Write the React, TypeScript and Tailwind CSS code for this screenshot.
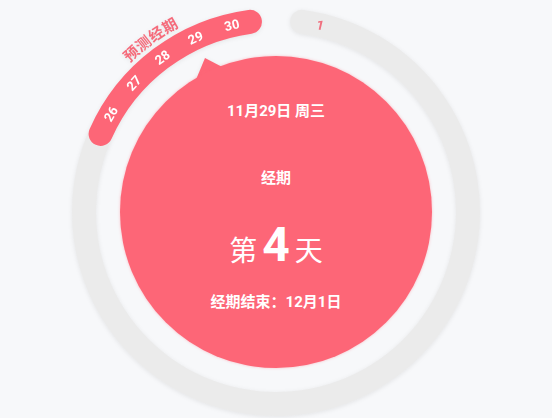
import React from 'react';

const CX = 276;
const CY = 212;
const RING_R = 192;

const PINK = '#fd6677';
const GREY = '#ebebeb';

// point on the dial, angle in degrees clockwise from 12 o'clock
function polar(r: number, deg: number) {
  const a = (deg * Math.PI) / 180;
  return [CX + r * Math.sin(a), CY - r * Math.cos(a)];
}

function arcPath(r: number, from: number, to: number) {
  const [x0, y0] = polar(r, from);
  const [x1, y1] = polar(r, to);
  const large = to - from > 180 ? 1 : 0;
  return `M${x0.toFixed(2)} ${y0.toFixed(2)} A${r} ${r} 0 ${large} 1 ${x1.toFixed(2)} ${y1.toFixed(2)}`;
}

const periodDays = [
  { label: '26', angle: -59.3 },
  { label: '27', angle: -47.8 },
  { label: '28', angle: -36.3 },
  { label: '29', angle: -24.8 },
  { label: '30', angle: -13.3 },
];

function Dial() {
  return (
    <svg
      width="552"
      height="418"
      viewBox="0 0 552 418"
      className="absolute inset-0 drop-shadow-[0_1px_2px_rgba(0,0,0,0.08)]"
    >
      <defs>
        <path id="forecast-path" d={arcPath(209, -80, 0)} fill="none" />
      </defs>

      {/* grey track */}
      <path d={arcPath(RING_R, 7.8, 294)} stroke={GREY} strokeWidth={24} strokeLinecap="round" fill="none" />
      {/* predicted period arc */}
      <path d={arcPath(RING_R, -66, -7.8)} stroke={PINK} strokeWidth={24} strokeLinecap="round" fill="none" />

      {periodDays.map((d) => (
        <text
          key={d.label}
          x={CX}
          y={CY - RING_R + 4.6}
          transform={`rotate(${d.angle} ${CX} ${CY})`}
          textAnchor="middle"
          fontSize={13}
          fontWeight={700}
          fill="#ffffff"
        >
          {d.label}
        </text>
      ))}
      <text
        x={CX}
        y={CY - RING_R + 4.6}
        transform={`rotate(13.3 ${CX} ${CY})`}
        textAnchor="middle"
        fontSize={13}
        fontWeight={700}
        fill="#f0707f"
      >
        1
      </text>

      <text fontSize={15} fontWeight={700} fill="#f56b7b" letterSpacing={0.5}>
        <textPath href="#forecast-path" startOffset="55%" textAnchor="middle">
          预测经期
        </textPath>
      </text>

      {/* pointer to today */}
      <polygon points="205,58 195,82 228,70" fill={PINK} />
    </svg>
  );
}

export default function App() {
  return (
    <div className="min-h-screen bg-[#f7f8fa] flex justify-center font-['Roboto','Noto_Sans_CJK_SC',sans-serif]">
      <div className="relative w-[552px] h-[418px] overflow-hidden">
        <Dial />
        <div className="relative flex justify-center pt-[56px]">
          <div className="w-[312px] h-[312px] rounded-full bg-[#fd6677] shadow-[0_0_3px_rgba(253,102,120,0.4)] flex flex-col items-center pt-[45px] text-white">
            <div className="text-[15px] leading-[20px] font-bold">11月29日 周三</div>
            <div className="mt-[47px] text-[15px] leading-[20px] font-bold">经期</div>
            <div className="mt-[33px] flex items-baseline leading-none">
              <span className="text-[28px]">第</span>
              <span className="mx-[5px] text-[48px] font-bold">4</span>
              <span className="text-[28px]">天</span>
            </div>
            <div className="mt-[23px] text-[15px] leading-[20px] font-bold">经期结束：12月1日</div>
          </div>
        </div>
      </div>
    </div>
  );
}
